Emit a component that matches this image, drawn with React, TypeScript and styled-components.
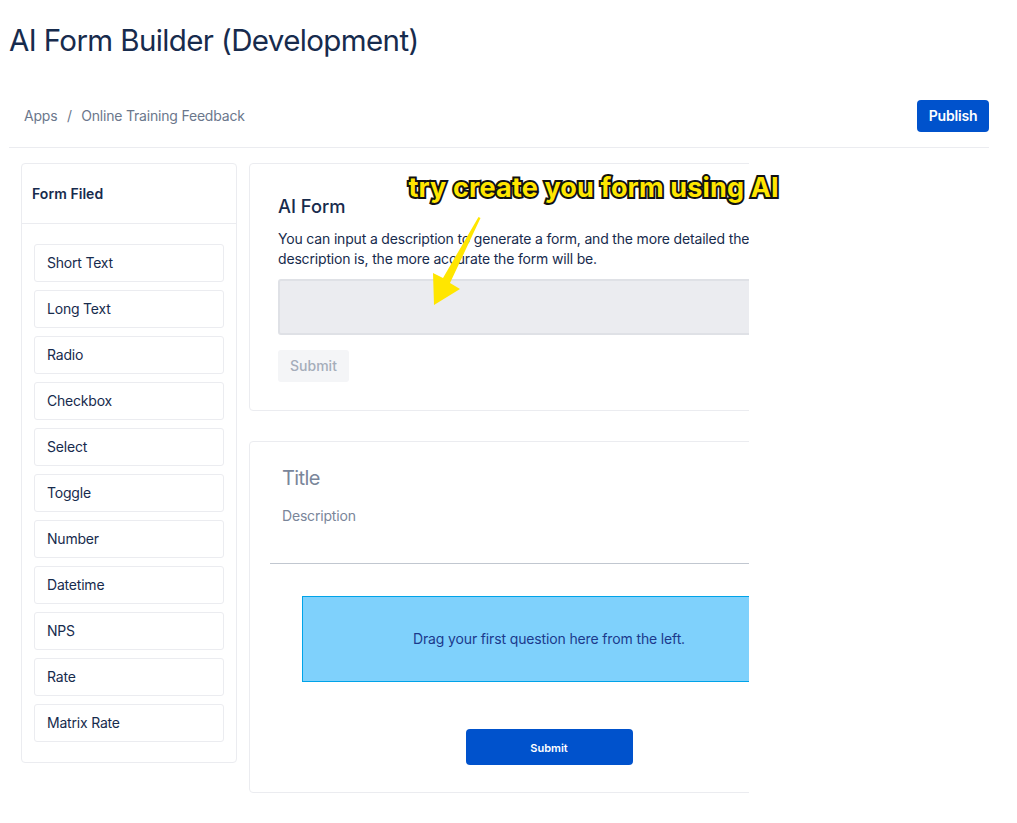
import React from "react";
import styled, { createGlobalStyle } from "styled-components";

const Global = createGlobalStyle`
  html, body { margin: 0; padding: 0; background: #fff; }
  body { font-family: Inter, "Liberation Sans", sans-serif; color: #172b4d; }
  * { box-sizing: border-box; }
`;

const Page = styled.div`
  position: relative;
  width: 1017px;
  height: 823px;
  overflow: hidden;
  padding: 0 28px 0 9px;
`;

const PageTitle = styled.h1`
  margin: 0;
  padding-top: 20px;
  height: 100px;
  font-size: 29.5px;
  line-height: 40px;
  font-weight: 400;
  letter-spacing: -0.62px;
  color: #172b4d;
`;

const TopBar = styled.div`
  display: flex;
  align-items: center;
  justify-content: space-between;
  height: 48px;
  padding: 0 0 16px 15px;
  border-bottom: 1px solid #ebecf0;
`;

const Breadcrumbs = styled.div`
  display: flex;
  gap: 9.5px;
  font-size: 14px;
  line-height: 32px;
  letter-spacing: -0.2px;
  color: #6b778c;
`;

const PrimaryButton = styled.button<{ $wide?: boolean }>`
  border: 0;
  border-radius: 4px;
  background: #0052cc;
  color: #fff;
  font-family: inherit;
  font-weight: 600;
  font-size: ${(p) => (p.$wide ? "11px" : "14px")};
  letter-spacing: ${(p) => (p.$wide ? "0" : "-0.2px")};
  width: ${(p) => (p.$wide ? "167px" : "72px")};
  height: ${(p) => (p.$wide ? "36px" : "32px")};
  padding: ${(p) => (p.$wide ? "2px 0 0" : "0")};
`;

const Columns = styled.div`
  display: flex;
  align-items: flex-start;
  gap: 12px;
  padding: 15px 0 0 12px;
`;

const Sidebar = styled.aside`
  width: 216px;
  height: 600px;
  flex: none;
  border: 1px solid #ebecf0;
  border-radius: 4px;
`;

const SidebarHeader = styled.div`
  height: 60px;
  padding: 0 0 0 10px;
  display: flex;
  align-items: center;
  font-size: 14px;
  font-weight: 600;
  letter-spacing: 0.05px;
  color: #172b4d;
  border-bottom: 1px solid #ebecf0;
`;

const FieldList = styled.div`
  display: flex;
  flex-direction: column;
  gap: 8px;
  padding: 20px 12px 0;
`;

const FieldItem = styled.div`
  height: 38px;
  padding: 0 0 1px 12px;
  display: flex;
  align-items: center;
  font-size: 14px;
  letter-spacing: -0.2px;
  color: #172b4d;
  border: 1px solid #ebecf0;
  border-radius: 3px;
`;

const Workspace = styled.main`
  width: 500px;
  flex: none;
  overflow: hidden;
  display: flex;
  flex-direction: column;
  gap: 30px;
`;

const Card = styled.section<{ $height: number }>`
  width: 640px;
  height: ${(p) => p.$height}px;
  border: 1px solid #ebecf0;
  border-radius: 4px;
`;

const AIBody = styled.div`
  padding: 28px 28px 0;
  width: 500px;
`;

const AIHeading = styled.h2`
  margin: 0;
  font-size: 18.3px;
  line-height: 28px;
  font-weight: 500;
  color: #172b4d;
`;

const AIText = styled.p`
  margin: 9px 0 0;
  font-size: 14px;
  line-height: 20px;
  letter-spacing: -0.17px;
  color: #172b4d;
  width: 480px;
`;

const PromptBox = styled.div`
  margin-top: 10px;
  width: 520px;
  height: 56px;
  background: #ebecf0;
  border: 2px solid #dfe1e6;
  border-radius: 3px;
`;

const DisabledButton = styled.button`
  display: block;
  margin-top: 15px;
  width: 71px;
  height: 32px;
  padding: 0 0 1px;
  border: 0;
  border-radius: 3px;
  background: #f4f5f7;
  color: #a5adba;
  font-family: inherit;
  font-size: 14px;
  font-weight: 500;
`;

const FormHead = styled.div`
  width: 640px;
  margin-left: 20px;
  height: 122px;
  padding: 21px 0 0 12px;
  border-bottom: 1px solid #c1c7d0;
`;

const FormTitle = styled.div`
  font-size: 20px;
  line-height: 30px;
  letter-spacing: -0.6px;
  color: #7a869a;
`;

const FormDescription = styled.div`
  margin-top: 13px;
  font-size: 14px;
  line-height: 20px;
  letter-spacing: -0.18px;
  color: #7a869a;
`;

const DropZone = styled.div`
  margin: 32px 0 0 52px;
  width: 494px;
  height: 86px;
  padding-bottom: 1px;
  display: flex;
  align-items: center;
  justify-content: center;
  background: #7fd1fc;
  border: 1px solid #00a3e8;
  font-size: 14px;
  letter-spacing: -0.14px;
  color: #1b3a8c;
`;

const SubmitRow = styled.div`
  margin: 47px 0 0 215.5px;
`;

const Annotation = styled.div`
  position: absolute;
  left: 408.5px;
  top: 171px;
  font-size: 27px;
  line-height: 34px;
  font-weight: 700;
  letter-spacing: 0.15px;
  white-space: nowrap;
  color: #ffe600;
  -webkit-text-stroke: 4px #111;
  paint-order: stroke fill;
`;

const ArrowSvg = styled.svg`
  position: absolute;
  left: 425px;
  top: 210px;
`;

const fields = ["Short Text","Long Text","Radio","Checkbox","Select","Toggle","Number","Datetime","NPS","Rate","Matrix Rate"];

export default function App() {
  return (
    <Page>
      <Global />
      <PageTitle>AI Form Builder (Development)</PageTitle>
      <TopBar>
        <Breadcrumbs>
          <span>Apps</span>
          <span>/</span>
          <span>Online Training Feedback</span>
        </Breadcrumbs>
        <PrimaryButton>Publish</PrimaryButton>
      </TopBar>
      <Columns>
        <Sidebar>
          <SidebarHeader>Form Filed</SidebarHeader>
          <FieldList>
            {fields.map((f) => (
              <FieldItem key={f}>{f}</FieldItem>
            ))}
          </FieldList>
        </Sidebar>
        <Workspace>
          <Card $height={248}>
            <AIBody>
              <AIHeading>AI Form</AIHeading>
              <AIText>
                You can input a description to generate a form, and the more detailed the description is, the more accurate the form will be.
              </AIText>
              <PromptBox />
              <DisabledButton>Submit</DisabledButton>
            </AIBody>
          </Card>
          <Card $height={352}>
            <FormHead>
              <FormTitle>Title</FormTitle>
              <FormDescription>Description</FormDescription>
            </FormHead>
            <DropZone>Drag your first question here from the left.</DropZone>
            <SubmitRow>
              <PrimaryButton $wide>Submit</PrimaryButton>
            </SubmitRow>
          </Card>
        </Workspace>
      </Columns>
      <Annotation>try create you form using AI</Annotation>
      <ArrowSvg width="60" height="100" viewBox="0 0 60 100">
        <path d="M53.5 7 L55.5 8 L25 73 L35 79 L9 95 L8 63 L18 68 Z" fill="#ffe600" />
      </ArrowSvg>
    </Page>
  );
}
